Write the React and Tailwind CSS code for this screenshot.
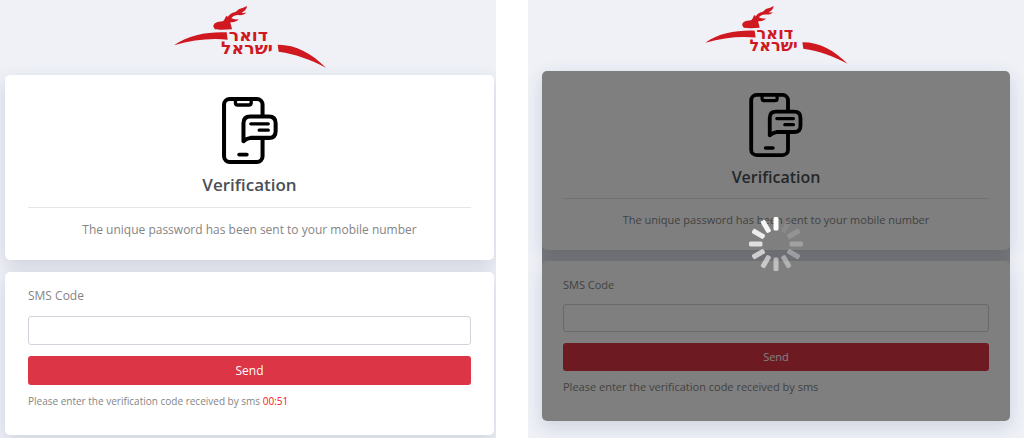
import { useState } from 'react';

const blades = [1, 0.08, 0.16, 0.26, 0.32, 0.4, 0.5, 0.58, 0.66, 0.75, 0.85, 0.93];

const Logo = ({ className }) => (
  <svg className={className} viewBox="28 18 456 186" fill="#cf1820" role="img" aria-label="דואר ישראל">
    <path d="M28 136C72 104 130 95 186 97L189 119C135 114 84 120 28 136Z" />
    <path d="M339 134C396 134 440 160 484 203C436 178 396 163 342 155Z" />
    <path d="M146 80C146 69 158 65 174 64C182 60 180 50 187 47C191 54 193 60 197 65C197 71 201 79 202 88C181 90 163 90 151 88Z" />
    <path d="M185 64C188 48 198 39 210 37C217 35 218 29 224 27C232 25 239 22 247 18C246 29 238 34 231 38C236 39 240 39 245 37C239 46 228 46 218 45C208 47 202 50 200 55C206 58 213 59 222 58C214 67 204 68 194 66Z" />
    <text textAnchor="middle" fontSize="52" fontWeight="700" fontFamily="'DejaVu Sans', sans-serif">
      <tspan x="251" y="124">דואר</tspan>
      <tspan x="247" y="162">ישראל</tspan>
    </text>
  </svg>
);

const PhoneIcon = ({ className }) => (
  <svg className={className} viewBox="82 37 167 200" fill="none" stroke="#000" strokeWidth="12" strokeLinecap="round" strokeLinejoin="round" aria-hidden="true">
    <rect x="88" y="43" width="115" height="188" rx="17" />
    <path d="M122 45V54Q122 61 129 61H162Q169 61 169 54V45" strokeWidth="10" />
    <path d="M133 209H156" strokeWidth="11" />
    <path d="M146 169V115Q146 95 166 95H222Q242 95 242 115V139Q242 159 222 159H167Q155 161 146 169Z" fill="#fff" />
    <path d="M168 117H220M193 136H220" strokeWidth="10" />
  </svg>
);

const Spinner = () => (
  <svg className="h-14 w-14" viewBox="-28 -28 56 56" fill="#fff" role="img" aria-label="Loading">
    {blades.map((opacity, i) => (
      <rect key={i} x="-2.5" y="-27" width="5" height="13.5" rx="1.5" opacity={opacity} transform={`rotate(${i * 30})`} />
    ))}
  </svg>
);

const card = 'rounded-[5px] bg-white shadow-[0_6px_18px_rgba(40,50,90,0.16)]';

const CodeEntry = () => {
  const [code, setCode] = useState('');

  return (
    <section className="overflow-hidden bg-[#eff1f7] pt-1.5 pr-0.5 pb-1 pl-[5px]">
      <Logo className="mx-auto h-[62px] w-[152px]" />
      <div className={`mt-[7px] px-[23px] pt-[22px] pb-5 text-center ${card}`}>
        <PhoneIcon className="mx-auto h-[67px] w-14" />
        <h1 className="mt-[9px] text-[17px] leading-6 font-semibold text-[#495057]">Verification</h1>
        <hr className="mt-2.5 border-[#e4e5e8]" />
        <p className="mt-3 text-[12px] leading-5 text-[#858585]">The unique password has been sent to your mobile number</p>
      </div>
      <form className={`mt-3 px-[23px] pt-3.5 pb-[26px] ${card}`} onSubmit={(e) => e.preventDefault()}>
        <label htmlFor="code" className="block text-[12px] leading-5 text-[#858585]">SMS Code</label>
        <input id="code" className="mt-2.5 block h-[29px] w-full rounded-[3px] border border-[#ced4da] px-3 text-[12px] outline-none" value={code} onChange={(e) => setCode(e.target.value)} />
        <button type="submit" className="mt-[11px] block h-[29px] w-full rounded-[3px] bg-[#dc3545] text-[12px] text-white">Send</button>
        <p className="mt-2 text-[10px] leading-4 text-[#858585]">
          Please enter the verification code received by sms <span className="text-[#ff1010]">00:51</span>
        </p>
      </form>
    </section>
  );
};

const CodeSending = () => (
  <section className="overflow-hidden bg-[#eff1f7] px-3.5 pt-1.5 pb-4">
    <Logo className="mx-auto h-[58px] w-[145px]" />
    <div className="relative mt-[7px]">
      <div className={`px-[21px] pt-[22px] pb-5 text-center ${card}`}>
        <PhoneIcon className="mx-auto h-16 w-[54px]" />
        <h1 className="mt-2 text-[16px] leading-6 font-semibold text-[#495057]">Verification</h1>
        <hr className="mt-[9px] border-[#e4e5e8]" />
        <p className="mt-[11px] text-[11px] leading-5 text-[#858585]">The unique password has been sent to your mobile number</p>
      </div>
      <form className={`mt-[11px] px-[21px] pt-3.5 pb-[26px] ${card}`} onSubmit={(e) => e.preventDefault()}>
        <label htmlFor="sent-code" className="block text-[11px] leading-5 text-[#858585]">SMS Code</label>
        <input id="sent-code" className="mt-[9px] block h-7 w-full rounded-[3px] border border-[#ced4da] px-3 text-[11px] outline-none" readOnly />
        <button type="submit" className="mt-[11px] block h-7 w-full rounded-[3px] bg-[#dc3545] text-[11px] text-white">Send</button>
        <p className="mt-2 text-[11px] leading-4 text-[#858585]">Please enter the verification code received by sms</p>
      </form>
      <div className="absolute inset-0 flex items-center justify-center rounded-[5px] bg-black/50 pb-1">
        <Spinner />
      </div>
    </div>
  </section>
);

export default function App() {
  return (
    <main className="grid min-h-screen grid-cols-2 gap-8 bg-white font-['Open_Sans','Noto_Sans',sans-serif]">
      <CodeEntry />
      <CodeSending />
    </main>
  );
}
